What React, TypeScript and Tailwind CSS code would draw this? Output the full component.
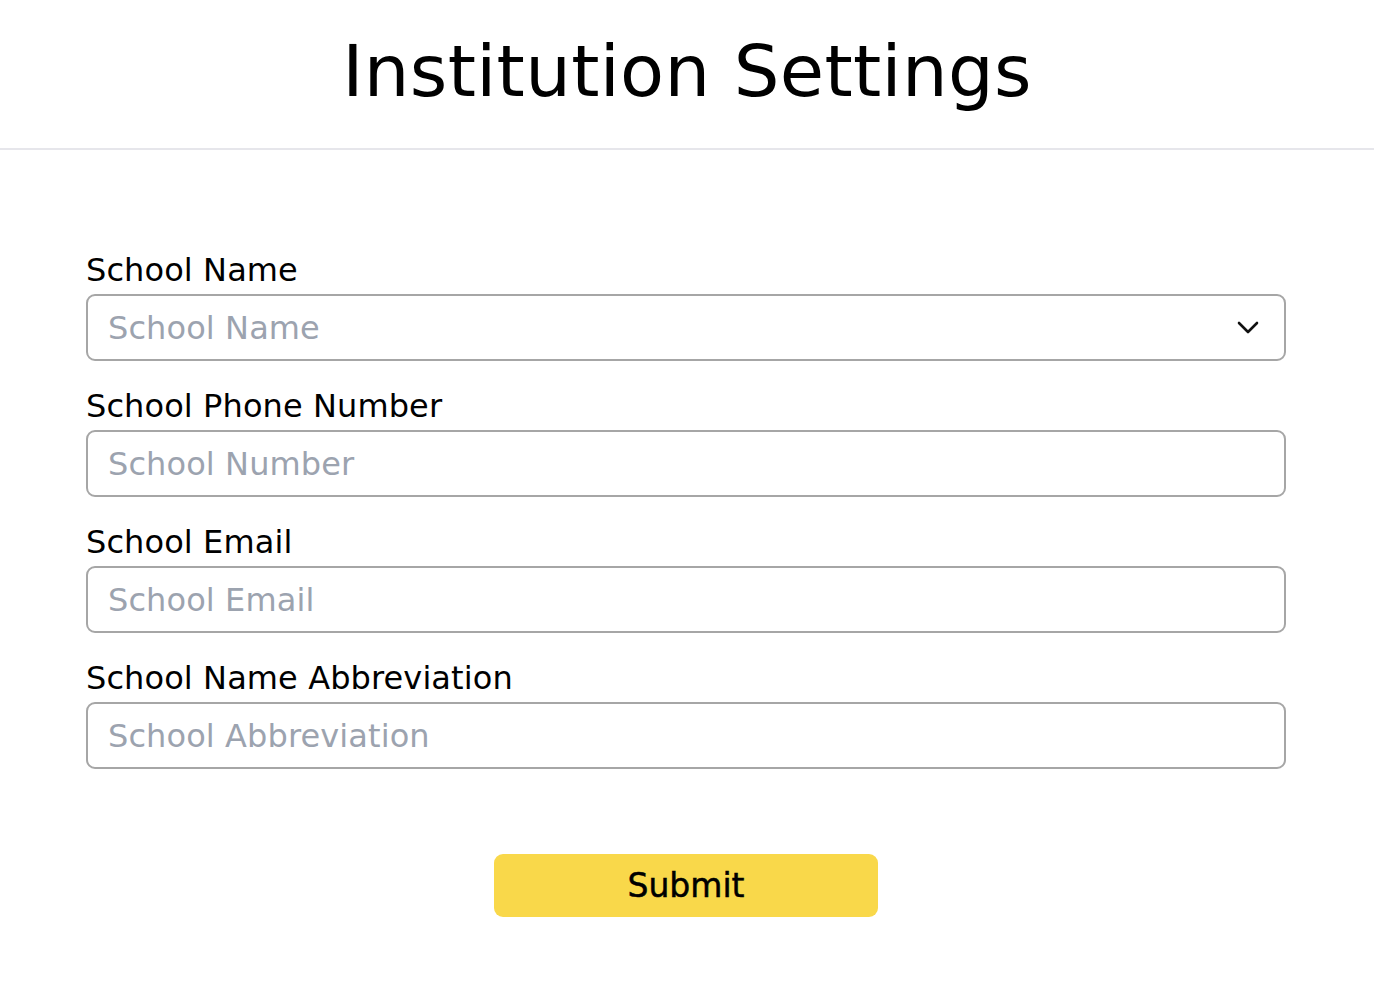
import React from "react";

const fields = [
  { label: "School Name", placeholder: "School Name", select: true },
  { label: "School Phone Number", placeholder: "School Number" },
  { label: "School Email", placeholder: "School Email" },
  { label: "School Name Abbreviation", placeholder: "School Abbreviation" },
];

export default function App() {
  return (
    <div className="min-h-screen bg-white text-black font-['DejaVu_Sans',sans-serif]">
      <header className="h-[150px] border-b-2 border-[#e6e6eb] pt-[35px] text-center">
        <h1 className="text-[72px] leading-[72px] font-normal tracking-[0.35px]">Institution Settings</h1>
      </header>
      <form className="ml-[86px] w-[1200px] pt-[100px] flex flex-col gap-[25px]" onSubmit={(e) => e.preventDefault()}>
        {fields.map((f) => (
          <div key={f.label} className="flex flex-col">
            <label className="text-[32px] leading-[40px] mb-[4px] tracking-[0.1px]">{f.label}</label>
            {f.select ? (
              <div className="h-[67px] rounded-[9px] border-2 border-[#a6a6a6] pl-[20px] pr-[25px] flex items-center justify-between">
                <span className="text-[32px] text-[#9ca3af] tracking-[0.1px]">{f.placeholder}</span>
                <svg width="22" height="14" viewBox="0 0 22 14" fill="none">
                  <polyline points="2,2 11,11 20,2" stroke="#111" strokeWidth="2.6" strokeLinecap="round" strokeLinejoin="round" />
                </svg>
              </div>
            ) : (
              <input
                placeholder={f.placeholder}
                className="h-[67px] rounded-[9px] border-2 border-[#a6a6a6] px-[20px] text-[32px] tracking-[0.1px] outline-none placeholder:text-[#9ca3af]"
              />
            )}
          </div>
        ))}
        <div className="flex justify-center pt-[60px]">
          <button type="submit" className="w-[384px] h-[63px] rounded-[9px] bg-[#f9d84a] text-[33px] text-black [-webkit-text-stroke:0.5px_black]">
            Submit
          </button>
        </div>
      </form>
    </div>
  );
}
